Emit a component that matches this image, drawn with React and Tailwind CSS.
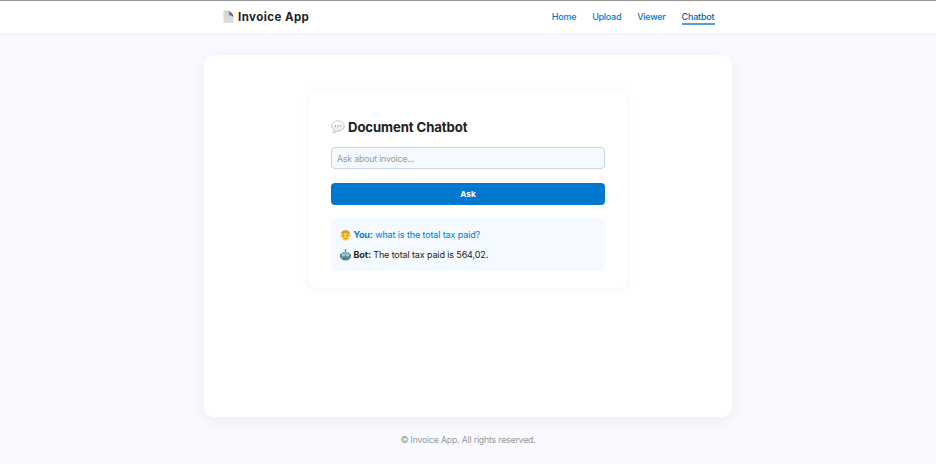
function PageIcon() {
  return (
    <svg className="-mt-0.5 h-[13px] w-[11px] shrink-0" viewBox="0 0 11 13" aria-hidden="true">
      <defs>
        <linearGradient id="paper" x1="0" y1="0" x2="0" y2="1">
          <stop offset="0" stopColor="#d2d2d2" />
          <stop offset="1" stopColor="#e0e0e0" />
        </linearGradient>
        <linearGradient id="fold" x1="0" y1="0" x2="1" y2="1">
          <stop offset="0" stopColor="#b0b0b0" />
          <stop offset="1" stopColor="#333" />
        </linearGradient>
      </defs>
      <path d="M.4 .4H5.5L10.4 5.5V12.6H.4Z" fill="url(#paper)" />
      <path d="M5.2 .2C6 1.5 6.1 3.3 5.7 5.300C7.3 5.100 9.2 5.500 10.5 7C9.800 3.4 7.8 1.3 5.2 .2Z" fill="url(#fold)" />
      <path d="M.4 12.5H10.4" stroke="#c8c8c8" strokeWidth=".4" />
    </svg>
  );
}

function SpeechIcon() {
  return (
    <svg className="-mt-px h-[14px] w-[14px] shrink-0" viewBox="0 0 14 14" aria-hidden="true">
      <defs>
        <linearGradient id="bubble" x1="0" y1="0" x2="0" y2="1">
          <stop offset="0" stopColor="#fff" />
          <stop offset="1" stopColor="#e2e2e2" />
        </linearGradient>
      </defs>
      <path d="M7 .9C3.4 .9 .7 3.1 .7 6C.7 7.8 1.7 9.3 3.3 10.1C3.200 11.200 2.700 12.100 1.900 12.900C3.600 12.800 4.900 12.100 5.800 11C6.200 11.100 6.600 11.100 7 11.100C10.600 11.100 13.300 8.900 13.300 6S10.600 .9 7 .9Z" fill="url(#bubble)" stroke="#b5b5b5" strokeWidth=".7" />
      <circle cx="4.500" cy="6" r=".55" fill="#555" />
      <circle cx="7" cy="6" r=".55" fill="#555" />
      <circle cx="9.500" cy="6" r=".55" fill="#555" />
    </svg>
  );
}

function PersonIcon() {
  return (
    <svg className="h-[11px] w-[11px] shrink-0" viewBox="0 0 11 11" aria-hidden="true">
      <circle cx="1" cy="6" r=".7" fill="#f0ae32" />
      <circle cx="10" cy="6" r=".7" fill="#f0ae32" />
      <ellipse cx="5.500" cy="5.700" rx="4.300" ry="5" fill="#ffcd45" />
      <path d="M1 5.500C.5 2.200 2.300 .2 5.500 .2S10.500 2.200 10 5.500L9.300 4C7.800 4 6.500 3.500 5.300 2.500C4.200 3.300 2.600 3.900 1.600 4Z" fill="#dc9c2b" />
      <circle cx="3.700" cy="5.600" r=".6" fill="#684419" />
      <circle cx="7.300" cy="5.600" r=".6" fill="#684419" />
      <path d="M3.700 8.100Q5.500 9.200 7.300 8.100" fill="none" stroke="#986020" strokeWidth=".6" />
    </svg>
  );
}

function RobotIcon() {
  return (
    <svg className="-mt-px h-[12px] w-[11px] shrink-0" viewBox="0 0 11 12" aria-hidden="true">
      <path d="M5.500 1.500V3.500" stroke="#4f7780" strokeWidth="1" />
      <circle cx="5.500" cy="1.200" r=".9" fill="#5577b5" />
      <rect x="0" y="5" width="1.600" height="4" rx=".7" fill="#477b88" />
      <rect x="9.400" y="5" width="1.600" height="4" rx=".7" fill="#477b88" />
      <path d="M.6 7.500C.6 4.500 2.600 2.800 5.500 2.800S10.400 4.500 10.400 7.500C10.400 10.200 8.800 11.500 5.500 11.500S.6 10.200 .6 7.500Z" fill="#5c9ba6" />
      <path d="M3 3.600Q5.500 2.500 8 3.600L7.500 4.500H3.500Z" fill="#a6cbd0" />
      <circle cx="3.500" cy="6.200" r="1.150" fill="#e8f5f5" />
      <circle cx="7.500" cy="6.200" r="1.150" fill="#e8f5f5" />
      <circle cx="3.500" cy="6.200" r=".4" fill="#2d515b" />
      <circle cx="7.500" cy="6.200" r=".4" fill="#2d515b" />
      <path d="M5.500 6.700L6.100 7.900H4.900Z" fill="#ca4a45" />
      <rect x="2.900" y="8.700" width="5.200" height="1.500" rx=".5" fill="#31535d" />
      <path d="M3.500 9.400H7.500" stroke="#d7e3e4" strokeWidth=".5" strokeDasharray=".8 .4" />
    </svg>
  );
}

const links = ["Home", "Upload", "Viewer"];

export default function App() {
  return (
    <div className="flex h-[464px] flex-col bg-[#f8faff] font-['Inter',sans-serif] text-[#222]">
      <header className="h-[33px] shrink-0 border-t border-[#999] bg-white shadow-[0_1px_4px_rgba(0,0,0,0.04)]">
        <div className="mx-auto flex h-8 w-[492px] items-center justify-between">
          <div className="flex items-center gap-[4px] pl-[1px]">
            <PageIcon />
            <span className="text-[11.500px] leading-[16px] font-bold tracking-[0.44px]">Invoice App</span>
          </div>
          <nav className="-mr-[0.5px] flex items-start gap-[16px] text-[9px] leading-[13px] font-medium tracking-[-0.27px] text-[#0078d0]">
            {links.map((link) => (
              <a key={link} href="#">{link}</a>
            ))}
            <a href="#" className="-mb-px border-b-2 border-[#4c9fdc] tracking-[-0.18px] text-[#0065ad]">Chatbot</a>
          </nav>
        </div>
      </header>

      <main className="mx-auto mt-[22px] h-[362px] w-[528px] shrink-0 rounded-[10px] bg-white pt-[35px] shadow-[0_4px_16px_rgba(0,0,0,0.06)]">
        <section className="mx-auto h-[198px] w-[318px] rounded-[9px] bg-white px-[22px] pt-[28px] shadow-[0_1px_9px_rgba(0,0,0,0.05)]">
          <h1 className="flex h-[19px] items-center gap-[3px] text-[13.200px] leading-[19px] font-bold tracking-[-0.12px]">
            <SpeechIcon />
            Document Chatbot
          </h1>
          <input
            aria-label="Ask about invoice"
            placeholder="Ask about invoice..."
            className="mt-[10px] block h-[22px] w-full rounded-[4px] border border-[#cbd5e1] bg-[#f4faff] px-[5px] text-[8.800px] tracking-[-0.2px] outline-none placeholder:text-[#999]"
          />
          <button className="mt-[14px] block h-[22px] w-full rounded-[4px] bg-[#0078d0] text-[8.200px] font-bold text-white">Ask</button>
          <div className="mt-[13px] h-[53px] rounded-[5px] bg-[#f4faff] px-[9px] pt-[10px] text-[9px] leading-[14px] tracking-[-0.12px]">
            <p className="flex items-center gap-[2.500px] text-[#0078d0]">
              <PersonIcon />
              <span><strong>You:</strong> what is the total tax paid?</span>
            </p>
            <p className="mt-[6px] flex items-center gap-[2.500px]">
              <RobotIcon />
              <span><strong>Bot:</strong> The total tax paid is 564,02.</span>
            </p>
          </div>
        </section>
      </main>

      <footer className="mt-[16px] text-center text-[8.800px] leading-[14px] tracking-[-0.22px] text-[#999]">© Invoice App. All rights reserved.</footer>
    </div>
  );
}
